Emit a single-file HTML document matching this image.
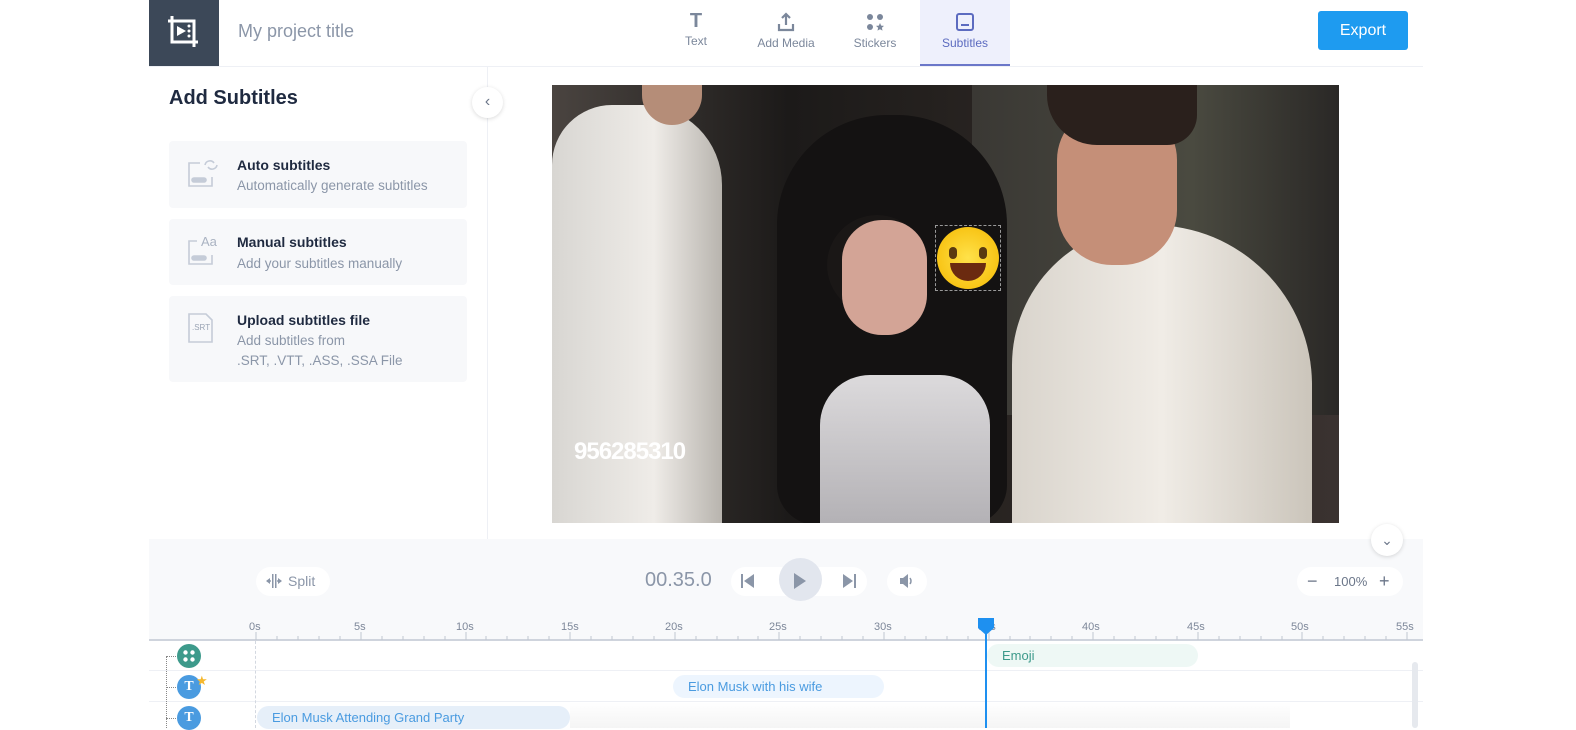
<!DOCTYPE html><html><head><style>
*{margin:0;padding:0;box-sizing:border-box}
body{width:1576px;height:728px;background:#fff;font-family:"Liberation Sans",sans-serif;position:relative;overflow:hidden}
.a{position:absolute}
.tab{position:absolute;top:0;height:66px;text-align:center;font-size:12px;color:#7b879b}
.card{position:absolute;left:169px;width:298px;background:#f7f8fa;border-radius:4px}
.card b{position:absolute;left:68px;font-size:14px;color:#1f2a40}
.card span{position:absolute;left:68px;font-size:13.5px;color:#8b96a8;line-height:20px}
.tl{position:absolute;top:621px;font-size:11px;color:#7d8799}
</style></head><body>
<div class="a" style="left:149px;top:0;width:70px;height:66px;background:#3c4858"></div>
<svg class="a" style="left:164px;top:12px" width="40" height="40" viewBox="0 0 40 40" fill="none" stroke="#fff" stroke-width="3"><path d="M8 4v26h26M4 9h26v26"/><path d="M13 14l9 5-9 5z" fill="#fff" stroke="none"/><circle cx="25" cy="14" r="1.5" fill="#fff" stroke="none"/><circle cx="25" cy="19" r="1.5" fill="#fff" stroke="none"/><circle cx="25" cy="24" r="1.5" fill="#fff" stroke="none"/></svg>
<div class="a" style="left:238px;top:21px;font-size:18px;color:#8b96a8">My project title</div>
<div class="a" style="left:149px;top:66px;width:1274px;height:1px;background:#eef0f5"></div>
<div class="tab" style="left:666px;width:60px"><div style="font-size:20px;font-weight:bold;margin-top:10px;height:24px">T</div>Text</div>
<div class="tab" style="left:750px;width:72px"><svg style="margin-top:12px" width="20" height="20" viewBox="0 0 20 20" fill="none" stroke="#7b879b" stroke-width="2.2"><path d="M10 2v11M6 6l4-4 4 4M3 12v6h14v-6"/></svg><div style="margin-top:1px">Add Media</div></div>
<div class="tab" style="left:845px;width:60px"><svg style="margin-top:12px" width="20" height="20" viewBox="0 0 20 20" fill="#7b879b"><circle cx="5" cy="5" r="3"/><circle cx="15" cy="5" r="3"/><circle cx="5" cy="15" r="3"/><path d="M15 11l1.2 2.6 2.8.3-2.1 1.9.6 2.8-2.5-1.4-2.5 1.4.6-2.8-2.1-1.9 2.8-.3z"/></svg><div style="margin-top:1px">Stickers</div></div>
<div class="tab" style="left:920px;width:90px;background:#eef0fc;color:#5c6bc0;border-bottom:2px solid #6b77c9"><svg style="margin-top:12px" width="20" height="20" viewBox="0 0 20 20" fill="none" stroke="#5c6bc0" stroke-width="2"><rect x="2" y="2" width="16" height="16" rx="2"/><path d="M6 13h8"/></svg><div style="margin-top:1px">Subtitles</div></div>
<div class="a" style="left:1318px;top:11px;width:90px;height:39px;background:#1e9bf0;border-radius:3px;color:#fff;font-size:16px;text-align:center;line-height:39px">Export</div>
<div class="a" style="left:487px;top:67px;width:1px;height:472px;background:#eef0f5"></div>
<div class="a" style="left:169px;top:87px;font-size:20px;font-weight:bold;color:#1f2a40">Add Subtitles</div>
<div class="a" style="left:472px;top:87px;width:31px;height:31px;border-radius:50%;background:#fff;box-shadow:0 1px 4px rgba(0,0,0,.15);color:#6b7689;text-align:center;line-height:30px;font-size:16px">‹</div>
<div class="card" style="top:141px;height:67px"><svg class="a" style="left:18px;top:16px" width="34" height="32" viewBox="0 0 34 32" fill="none" stroke="#c5ccd8" stroke-width="1.6"><path d="M13 6H2v23h23V20"/><rect x="5" y="21" width="14" height="4" rx="2" fill="#c5ccd8"/><path d="M18 8a5 5 0 019-2M30 8a5 5 0 01-9 2"/></svg><b style="top:16px">Auto subtitles</b><span style="top:35px">Automatically generate subtitles</span></div>
<div class="card" style="top:219px;height:66px"><svg class="a" style="left:18px;top:16px" width="34" height="32" viewBox="0 0 34 32" fill="none" stroke="#c5ccd8" stroke-width="1.6"><path d="M10 6H2v23h23V20"/><rect x="5" y="21" width="14" height="4" rx="2" fill="#c5ccd8"/></svg><div class="a" style="left:32px;top:15px;font-size:13px;color:#aab3c2">Aa</div><b style="top:15px">Manual subtitles</b><span style="top:35px">Add your subtitles manually</span></div>
<div class="card" style="top:296px;height:86px"><svg class="a" style="left:18px;top:16px" width="28" height="32" viewBox="0 0 28 32" fill="none" stroke="#c5ccd8" stroke-width="1.6"><path d="M2 2h17l6 6v22H2z"/></svg><div class="a" style="left:23px;top:27px;font-size:8px;color:#9aa4b4">.SRT</div><b style="top:16px">Upload subtitles file</b><span style="top:35px">Add subtitles from<br>.SRT, .VTT, .ASS, .SSA File</span></div>
<!-- video -->
<div class="a" style="left:552px;top:85px;width:787px;height:438px;background:#2a2624;overflow:hidden">
<div class="a" style="left:0;top:0;width:787px;height:438px;background:linear-gradient(90deg,#4a4440,#1c1a19 30%,#2a2522 60%,#3a3230)"></div>
<div class="a" style="left:420px;top:0;width:367px;height:330px;background:linear-gradient(90deg,#3a3834,#4a4a40 60%,#2a2826)"></div>
<div class="a" style="left:0;top:20px;width:170px;height:420px;background:linear-gradient(90deg,#d8d6d2,#efece8 60%,#b8b4ae);border-radius:60px 80px 0 0"></div>
<div class="a" style="left:90px;top:0;width:60px;height:40px;background:#b58d78;border-radius:0 0 30px 30px"></div>
<div class="a" style="left:225px;top:30px;width:230px;height:410px;background:#141212;border-radius:110px 110px 40px 40px"></div>
<div class="a" style="left:275px;top:130px;width:100px;height:100px;background:#1a1716;border-radius:50px"></div>
<div class="a" style="left:290px;top:135px;width:85px;height:115px;background:#d3a496;border-radius:40px"></div>
<div class="a" style="left:268px;top:290px;width:170px;height:150px;background:linear-gradient(#dcdadc,#b3b1b5);border-radius:50px 50px 0 0"></div>
<div class="a" style="left:460px;top:140px;width:300px;height:300px;background:linear-gradient(90deg,#d9d4cc,#f0ece6 50%,#cbc5bb);border-radius:140px 160px 0 0"></div>
<div class="a" style="left:505px;top:20px;width:120px;height:160px;background:#c58f78;border-radius:55px"></div>
<div class="a" style="left:495px;top:0;width:150px;height:60px;background:#2a201c;border-radius:0 0 30px 50px"></div>
<div class="a" style="left:22px;top:353px;font-size:24px;font-weight:bold;color:#fff;letter-spacing:-1px">956285310</div>
<div class="a" style="left:383px;top:140px;width:66px;height:66px;border:1px dashed #999"></div>
<div class="a" style="left:385px;top:142px;width:62px;height:62px;border-radius:50%;background:radial-gradient(#ffe24a,#f5b800)"></div>
<div class="a" style="left:397px;top:162px;width:8px;height:12px;border-radius:4px;background:#5a3a10"></div>
<div class="a" style="left:427px;top:162px;width:8px;height:12px;border-radius:4px;background:#5a3a10"></div>
<div class="a" style="left:398px;top:178px;width:36px;height:18px;border-radius:0 0 18px 18px;background:#6b2a10"></div>
</div>
<!-- bottom -->
<div class="a" style="left:149px;top:539px;width:1274px;height:101px;background:#f8f9fb"></div>
<div class="a" style="left:1371px;top:524px;width:32px;height:32px;border-radius:50%;background:#fff;box-shadow:0 1px 4px rgba(0,0,0,.15);text-align:center;line-height:32px;color:#6b7689;font-size:14px">⌄</div>
<div class="a" style="left:256px;top:567px;width:74px;height:29px;border-radius:15px;background:#fff;color:#8b96a8;font-size:14px;line-height:29px;padding-left:32px">Split</div>
<svg class="a" style="left:265px;top:573px" width="18" height="16" viewBox="0 0 18 16" fill="#8b96a8"><rect x="7" y="1" width="1.5" height="14"/><rect x="10" y="1" width="1.5" height="14"/><path d="M1 8l4-3v6zM17 8l-4-3v6z"/><rect x="2" y="7.3" width="4" height="1.4"/><rect x="12" y="7.3" width="4" height="1.4"/></svg>
<div class="a" style="left:645px;top:569px;font-size:20px;color:#8b96a8">00.35.0</div>
<div class="a" style="left:731px;top:567px;width:136px;height:29px;border-radius:15px;background:#fff"></div>
<div class="a" style="left:779px;top:558px;width:43px;height:43px;border-radius:50%;background:#e2e6ee"></div>
<svg class="a" style="left:740px;top:573px" width="120" height="16" viewBox="0 0 120 16" fill="#8b96a8"><rect x="1" y="1" width="2" height="14"/><path d="M14 1L4 8l10 7z"/><path d="M54 0v16l12-8z"/><path d="M103 1l10 7-10 7z"/><rect x="114" y="1" width="2" height="14"/></svg>
<div class="a" style="left:887px;top:567px;width:40px;height:29px;border-radius:15px;background:#fff"></div>
<svg class="a" style="left:899px;top:573px" width="16" height="16" viewBox="0 0 16 16" fill="#8b96a8"><path d="M1 5h3l5-4v14l-5-4H1z"/><path d="M11 5q2 3 0 6" stroke="#8b96a8" fill="none" stroke-width="1.5"/></svg>
<div class="a" style="left:1297px;top:567px;width:106px;height:29px;border-radius:15px;background:#fff;font-size:13px;color:#6b7689;line-height:29px"><span style="position:absolute;left:10px;font-size:18px">−</span><span style="position:absolute;left:37px">100%</span><span style="position:absolute;left:82px;font-size:18px">+</span></div>
<div class="a" style="left:149px;top:639px;width:1274px;height:2px;background:#cfd4dd"></div>
<div class="tl" style="left:249px">0s</div><div class="tl" style="left:354px">5s</div><div class="tl" style="left:456px">10s</div><div class="tl" style="left:561px">15s</div><div class="tl" style="left:665px">20s</div><div class="tl" style="left:769px">25s</div><div class="tl" style="left:874px">30s</div><div class="tl" style="left:978px">35s</div><div class="tl" style="left:1082px">40s</div><div class="tl" style="left:1187px">45s</div><div class="tl" style="left:1291px">50s</div><div class="tl" style="left:1396px">55s</div>
<svg class="a" style="left:0;top:632px" width="1576" height="8">
<path stroke="#c0c6d0" d="M256 0v8M277 4v4M298 4v4M319 4v4M340 4v4M361 0v8M382 4v4M403 4v4M424 4v4M445 4v4M466 0v8M486 4v4M507 4v4M528 4v4M549 4v4M570 0v8M591 4v4M612 4v4M633 4v4M654 4v4M675 0v8M696 4v4M717 4v4M738 4v4M758 4v4M779 0v8M800 4v4M821 4v4M842 4v4M863 4v4M884 0v8M905 4v4M926 4v4M947 4v4M968 4v4M989 0v8M1010 4v4M1030 4v4M1051 4v4M1072 4v4M1093 0v8M1114 4v4M1135 4v4M1156 4v4M1177 4v4M1198 0v8M1219 4v4M1240 4v4M1261 4v4M1282 4v4M1302 0v8M1323 4v4M1344 4v4M1365 4v4M1386 4v4M1407 0v8"/></svg>
<div class="a" style="left:149px;top:670px;width:1274px;height:1px;background:#eef0f5"></div>
<div class="a" style="left:149px;top:701px;width:1274px;height:1px;background:#eef0f5"></div>
<div class="a" style="left:255px;top:641px;border-left:1px dashed #d3d8e0;height:87px"></div>
<div class="a" style="left:166px;top:656px;border-left:1px dotted #888;height:72px"></div>
<div class="a" style="left:166px;top:656px;border-top:1px dotted #888;width:10px"></div>
<div class="a" style="left:166px;top:687px;border-top:1px dotted #888;width:10px"></div>
<div class="a" style="left:166px;top:718px;border-top:1px dotted #888;width:10px"></div>
<div class="a" style="left:177px;top:644px;width:24px;height:24px;border-radius:50%;background:#3d9a8b"></div>
<svg class="a" style="left:182px;top:649px" width="14" height="14" fill="#fff"><circle cx="3.5" cy="3.5" r="2.2"/><circle cx="10.5" cy="3.5" r="2.2"/><circle cx="3.5" cy="10.5" r="2.2"/><circle cx="10.5" cy="10.5" r="2.2"/></svg>
<div class="a" style="left:177px;top:675px;width:24px;height:24px;border-radius:50%;background:#4a9be0;color:#fff;font-weight:bold;font-size:14px;text-align:center;line-height:24px;font-family:'Liberation Serif',serif">T</div>
<div class="a" style="left:196px;top:673px;color:#f5b82e;font-size:13px">★</div>
<div class="a" style="left:177px;top:706px;width:24px;height:24px;border-radius:50%;background:#4a9be0;color:#fff;font-weight:bold;font-size:14px;text-align:center;line-height:24px;font-family:'Liberation Serif',serif">T</div>
<div class="a" style="left:987px;top:644px;width:211px;height:23px;border-radius:12px;background:#eef8f5;color:#3d9a8b;font-size:13px;line-height:23px;padding-left:15px">Emoji</div>
<div class="a" style="left:673px;top:675px;width:211px;height:23px;border-radius:12px;background:#edf5fe;color:#4a9be0;font-size:13px;line-height:23px;padding-left:15px">Elon Musk with his wife</div>
<div class="a" style="left:570px;top:702px;width:720px;height:26px;background:linear-gradient(#fff,#f2f2f2);opacity:.8"></div>
<div class="a" style="left:257px;top:706px;width:313px;height:23px;border-radius:12px;background:#e6eff9;color:#4a9be0;font-size:13px;line-height:23px;padding-left:15px">Elon Musk Attending Grand Party</div>
<div class="a" style="left:1412px;top:662px;width:6px;height:66px;border-radius:3px;background:#e6e9ee"></div>
<div class="a" style="left:985px;top:625px;width:2px;height:103px;background:#1e90f0"></div>
<svg class="a" style="left:977px;top:617px" width="18" height="18"><path d="M1 1h16v10l-8 7-8-7z" fill="#1e90f0"/></svg>
</body></html>
